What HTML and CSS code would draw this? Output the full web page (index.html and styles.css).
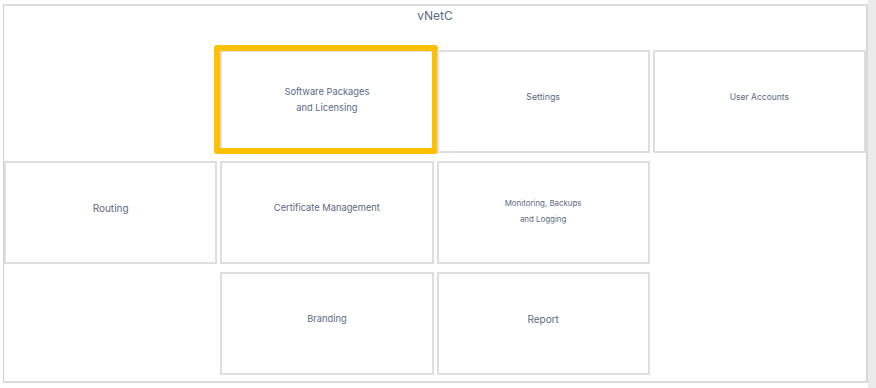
FILE: index.html
```html
<!DOCTYPE html>
<html lang="en">
<head>
  <meta charset="UTF-8">
  <meta name="viewport" content="width=device-width, initial-scale=1.0">
  <title>vNetC</title>
  <link rel="stylesheet" href="styles.css">
</head>
<body>
  <div class="page">
    <div class="frame">
      <div class="title">vNetC</div>
      <div class="grid">
        <div class="empty"></div>
        <div class="tile">
          <span class="highlight"></span>
          <p class="txt-md two-lines">Software Packages<br>and Licensing</p>
        </div>
        <div class="tile"><p class="txt-sm">Settings</p></div>
        <div class="tile"><p class="txt-xs">User Accounts</p></div>

        <div class="tile"><p class="txt-lg">Routing</p></div>
        <div class="tile"><p class="txt-md">Certificate Management</p></div>
        <div class="tile"><p class="txt-tiny two-lines">Monitoring, Backups<br>and Logging</p></div>
        <div class="empty"></div>

        <div class="empty"></div>
        <div class="tile"><p class="txt-md">Branding</p></div>
        <div class="tile"><p class="txt-lg">Report</p></div>
        <div class="empty"></div>
      </div>
    </div>
    <div class="track"></div>
  </div>
</body>
</html>
```

FILE: styles.css
```css
/* Estilos gerais */
body {
  margin: 0;
  padding: 0;
  background-color: #fff;
  font-family: Inter, "Liberation Sans", sans-serif;
}

.page {
  display: flex;
  height: 388px;
}

.frame {
  width: 862px;
  margin: 4px 0 5px 3px;
  border-top: 2px solid #dcdcdc;
  border-bottom: 2px solid #dcdcdc;
  border-left: 1px solid #d2d2d2;
  border-right: 2px solid #d8d8d8;
  padding-bottom: 6px;
}

/* barra lateral cinza */
.track {
  flex: 1;
  background-color: #ebebeb;
}

.title {
  height: 43px;
  padding-top: 1px;
  text-align: center;
  font-size: 12px;
  line-height: 18px;
  color: #5a6a84;
}

.grid {
  display: grid;
  grid-template-columns: repeat(4, 1fr);
  grid-template-rows: repeat(3, 103px);
  column-gap: 3px;
  row-gap: 8px;
}

.tile {
  position: relative;
  display: flex;
  align-items: center;
  justify-content: center;
  border: 2px solid #dedede;
  padding-bottom: 9px;
  box-sizing: border-box;
}

.tile p {
  margin: 0;
  text-align: center;
  line-height: 16px;
  color: #5a6a84;
}

.tile p.two-lines {
  margin-top: 6px;
}

/* tamanhos de texto diferentes por bloco */
.txt-lg { font-size: 10px; }
.txt-md { font-size: 9.3px; }
.txt-sm { font-size: 8.8px; }
.txt-xs { font-size: 8.5px; }
.txt-tiny { font-size: 7.9px; }

/* destaque amarelo */
.highlight {
  position: absolute;
  left: -8px;
  top: -7px;
  right: -6px;
  bottom: -3px;
  border: 6px solid #ffc000;
  border-radius: 3px;
}
```
